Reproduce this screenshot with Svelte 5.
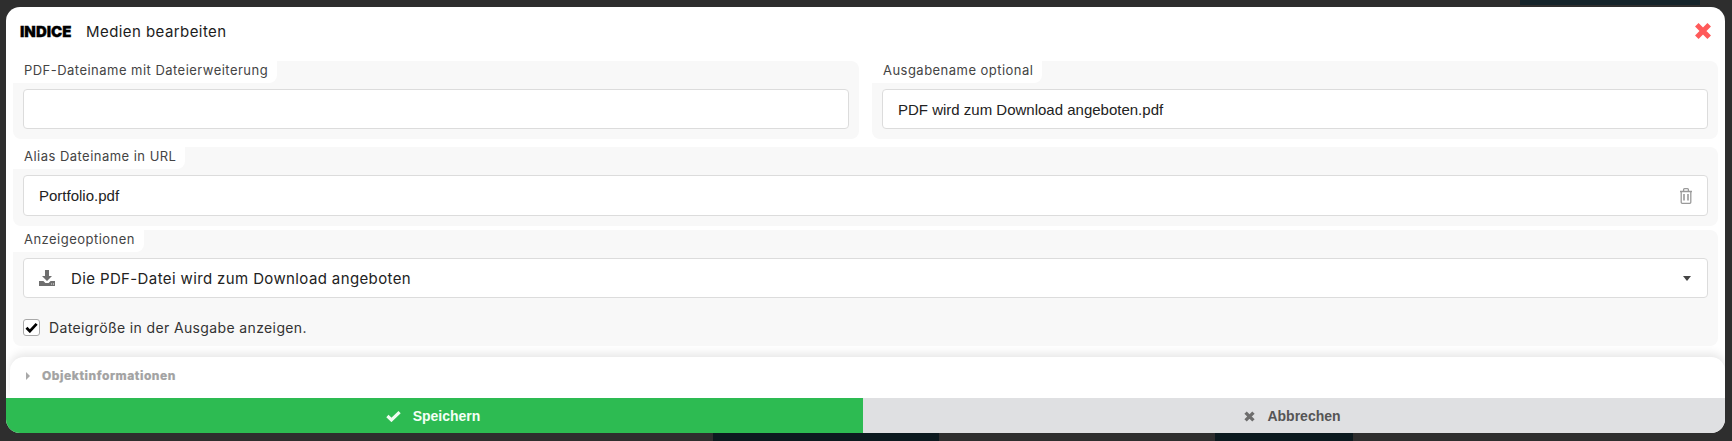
<script>
  const rowOne = [
    { label: 'PDF-Dateiname mit Dateierweiterung', value: '' },
    { label: 'Ausgabename optional', value: 'PDF wird zum Download angeboten.pdf' }
  ];
</script>

<div class="page">
  <div class="modal">
    <header class="head">
      <span class="brand">INDICE</span>
      <span class="title">Medien bearbeiten</span>
      <svg class="close" viewBox="0 0 18 18" aria-hidden="true"><path d="M2.8 2.8 15.2 15.2M15.2 2.8 2.8 15.2" fill="none" stroke="#ff5a5a" stroke-width="5"/></svg>
    </header>

    <div class="form">
      <div class="row">
        {#each rowOne as f}
          <section class="panel half">
            <div class="tab">{f.label}</div>
            <div class="field">{f.value}</div>
          </section>
        {/each}
      </div>

      <section class="panel alias">
        <div class="tab">Alias Dateiname in URL</div>
        <div class="field between">
          <span>Portfolio.pdf</span>
          <svg class="trash" viewBox="0 0 14 16" aria-hidden="true"><path d="M1 3.5h12M4.6 3.2V1.6q0-.9.9-.9h3q.9 0 .9.9v1.6M2.2 3.6v10.6q0 1.1 1.1 1.1h7.4q1.1 0 1.1-1.1V3.6" fill="none" stroke="#9a9a9a" stroke-width="1.3"/><path d="M5 6v6.6M9 6v6.6" fill="none" stroke="#9a9a9a" stroke-width="1.6"/></svg>
        </div>
      </section>

      <section class="panel options">
        <div class="tab">Anzeigeoptionen</div>
        <div class="field select">
          <svg class="dl" viewBox="0 0 16 16" aria-hidden="true"><path d="M6 0h4v6h3l-5 5-5-5h3z" fill="#6f6f6f"/><path d="M0 11h4.4l2 2h3.2l2-2H16v5H0z" fill="#6f6f6f"/><path d="M12.2 13.6h.9v.9h-.9zM14 13.6h.9v.9H14z" fill="#fff"/></svg>
          <span class="opt">Die PDF-Datei wird zum Download angeboten</span>
          <span class="caret"></span>
        </div>
        <label class="check">
          <span class="box"><svg viewBox="0 0 14 12" aria-hidden="true"><path d="M1.5 6.2 5.2 10 12.6 2" fill="none" stroke="#000" stroke-width="3"/></svg></span>
          Dateigröße in der Ausgabe anzeigen.
        </label>
      </section>
    </div>

    <div class="info">
      <span class="tri"></span>
      <span class="info-text">Objektinformationen</span>
    </div>

    <footer class="actions">
      <button class="save">
        <svg viewBox="0 0 16 12" aria-hidden="true"><path d="M1.5 6 5.8 10.2 14.5 1.8" fill="none" stroke="#f0fbf2" stroke-width="3.4"/></svg>
        Speichern
      </button>
      <button class="cancel">
        <svg viewBox="0 0 12 12" aria-hidden="true"><path d="M1.7 1.7l8.6 8.6M10.3 1.7l-8.6 8.6" fill="none" stroke="#6d6d6d" stroke-width="3.6"/></svg>
        Abbrechen
      </button>
    </footer>
  </div>
</div>

<style>
  :global(body) { margin: 0; background: #2e2e2e; }
  .page {
    height: 441px;
    box-sizing: border-box;
    padding: 7px 7px 8px 6px;
    background-color: #2e2e2e;
    background-image:
      linear-gradient(#0c1a1f, #0c1a1f),
      linear-gradient(#0c1a1f, #0c1a1f),
      linear-gradient(#15242b, #15242b);
    background-repeat: no-repeat;
    background-size: 226px 8px, 138px 8px, 180px 5px;
    background-position: 713px 100%, 1215px 100%, 1520px 0;
    font-family: Inter, "Noto Sans", sans-serif;
    overflow: hidden;
  }
  .modal {
    height: 426px;
    background: #fff;
    border-radius: 14px;
    display: flex;
    flex-direction: column;
    overflow: hidden;
  }
  .head {
    height: 54px;
    flex: none;
    display: flex;
    align-items: center;
    padding: 0 13px 6px 14px;
    box-sizing: border-box;
  }
  .brand { font-weight: 900; font-size: 15px; color: #000; width: 66px; -webkit-text-stroke: .3px #000; }
  .title { font-size: 15px; color: #1c1c1c; letter-spacing: .43px; }
  .close { width: 18px; height: 18px; margin-left: auto; }
  .form { display: flex; flex-direction: column; padding: 0 7px; flex: none; }
  .row { display: flex; gap: 13px; margin-bottom: 8px; }
  .panel {
    background: #f8f8f8;
    border-radius: 8px;
    padding: 0 10px;
    box-sizing: border-box;
  }
  .half { flex: 1; height: 78px; }
  .alias { height: 79px; margin-bottom: 4px; }
  .options { height: 116px; }
  .tab {
    display: table;
    background: #fff;
    margin-left: -10px;
    padding: 0 9px 0 11px;
    height: 22px;
    line-height: 18px;
    font-size: 13px;
    letter-spacing: .47px;
    color: #444;
    border-bottom-right-radius: 8px;
  }
  .field {
    margin-top: 6px;
    height: 40px;
    box-sizing: border-box;
    background: #fff;
    border: 1px solid #dcdcdc;
    border-radius: 4px;
    padding: 0 15px;
    display: flex;
    align-items: center;
    font-family: "Liberation Sans", Arial, sans-serif;
    font-size: 15px;
    color: #222;
  }
  .alias .field { height: 41px; }
  .between { justify-content: space-between; }
  .trash { width: 14px; height: 16px; margin-right: -1px; }
  .select { font-family: Inter, sans-serif; }
  .dl { width: 16px; height: 16px; }
  .opt { margin-left: 16px; font-size: 15px; color: #222; letter-spacing: .38px; }
  .caret {
    margin-left: auto;
    width: 0; height: 0;
    border-left: 4.5px solid transparent;
    border-right: 4.5px solid transparent;
    border-top: 5.5px solid #444;
    margin-right: 1px;
  }
  .check {
    display: flex;
    align-items: center;
    gap: 9px;
    margin-top: 21px;
    font-size: 14px;
    color: #333;
    letter-spacing: .37px;
  }
  .box {
    width: 17px; height: 17px;
    box-sizing: border-box;
    border: 1px solid #a9a9a9;
    border-radius: 3px;
    background: #fff;
    display: flex;
    align-items: center;
    justify-content: center;
  }
  .box svg { width: 13px; height: 11px; }
  .info {
    margin: 11px 0 0 4px;
    height: 41px;
    flex: none;
    background: #fff;
    border-radius: 14px 14px 0 0;
    box-shadow: 0 -4px 8px rgba(0, 0, 0, .09);
    display: flex;
    align-items: center;
    padding: 0 0 4px 16px;
    box-sizing: border-box;
    position: relative;
  }
  .tri { width: 0; height: 0; border-top: 4px solid transparent; border-bottom: 4px solid transparent; border-left: 4px solid #a8a8a8; }
  .info-text { margin-left: 12px; font-size: 12px; font-weight: 800; color: #a3a3a3; letter-spacing: .55px; -webkit-text-stroke: .2px #a3a3a3; }
  .actions { display: flex; height: 36px; flex: none; position: relative; }
  button {
    border: 0;
    flex: none;
    display: flex;
    align-items: center;
    justify-content: center;
    gap: 12px;
    font-family: "Liberation Sans", Arial, sans-serif;
    font-weight: 700;
    font-size: 14px;
    padding: 0 3px 0 0;
  }
  .save { width: 857px; background: #2dbb52; color: #f4fff6; }
  .save svg { width: 15px; height: 12px; }
  .cancel { flex: 1; background: #dfe0e2; color: #555; }
  .cancel svg { width: 11px; height: 11px; }
</style>
